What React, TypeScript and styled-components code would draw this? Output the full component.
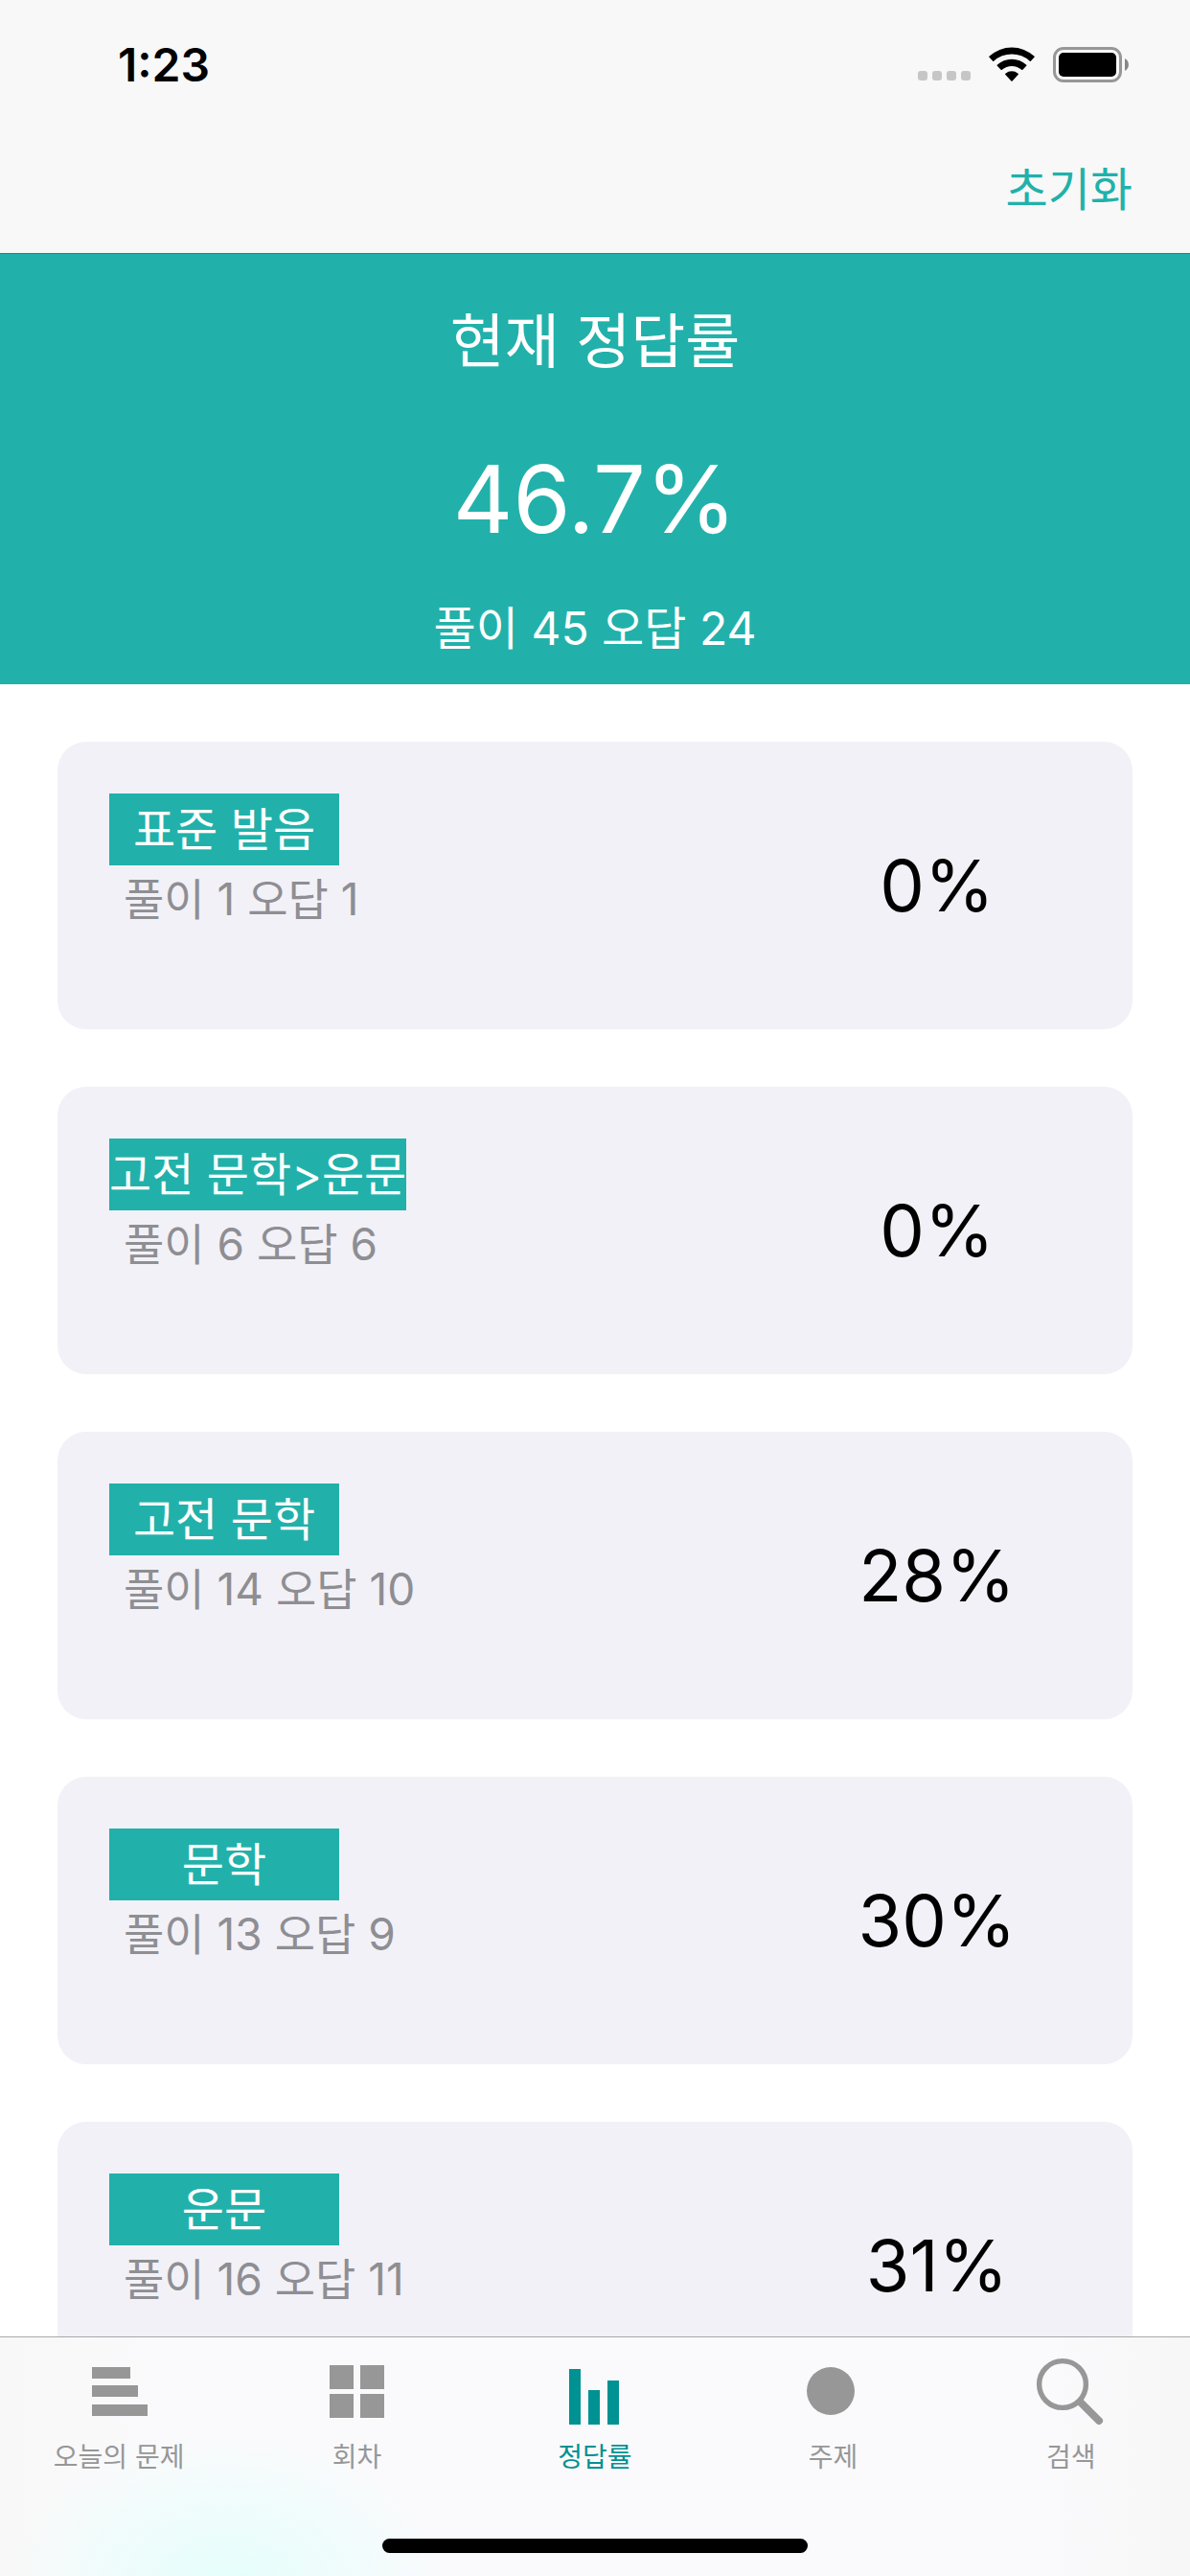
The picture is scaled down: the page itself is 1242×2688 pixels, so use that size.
import React from "react";
import styled, { createGlobalStyle } from "styled-components";

const TEAL = "#21b1aa";

const GlobalStyle = createGlobalStyle`
  *, *::before, *::after { box-sizing: border-box; }
  body {
    margin: 0;
    background: #ffffff;
    font-family: Inter, "Noto Sans CJK KR", sans-serif;
    color: #000000;
  }
  button { font: inherit; border: 0; padding: 0; background: none; cursor: pointer; }
  h1, p, ul { margin: 0; padding: 0; font-weight: 400; }
`;

const Screen = styled.div`
  display: flex;
  flex-direction: column;
  height: 100vh;
  overflow: hidden;
`;

const TopBar = styled.header`
  flex: none;
  background: #f8f8f8;
  border-bottom: 1px solid #1a8a84;
`;

const StatusBar = styled.div`
  display: flex;
  align-items: center;
  justify-content: space-between;
  height: 135px;
  padding: 0 63px 0 123px;
`;

const Clock = styled.time`
  font-size: 48px;
  line-height: 60px;
  font-weight: 600;
`;

const StatusIcons = styled.div`
  display: flex;
  align-items: center;
  gap: 19px;
`;

const SignalDots = styled.div`
  display: flex;
  align-self: flex-end;
  gap: 5px;
  padding-bottom: 2px;
`;

const SignalDot = styled.span`
  width: 10px;
  height: 10px;
  border-radius: 3px;
  background: #c6c6c6;
`;

const NavBar = styled.div`
  display: flex;
  align-items: center;
  justify-content: flex-end;
  height: 129px;
  padding: 0 60px 4px;
`;

const ResetButton = styled.button`
  color: ${TEAL};
  font-size: 48px;
  line-height: 72px;
`;

const Summary = styled.section`
  flex: none;
  display: flex;
  flex-direction: column;
  align-items: center;
  padding: 32px 60px 27px;
  background: ${TEAL};
  color: #ffffff;
`;

const SummaryTitle = styled.h1`
  font-size: 62px;
  line-height: 120px;
`;

const SummaryRate = styled.p`
  font-size: 97px;
  line-height: 208px;
`;

const SummaryCounts = styled.p`
  font-size: 48px;
  line-height: 62px;
`;

const TopicList = styled.ul`
  flex: 1;
  min-height: 0;
  display: flex;
  flex-direction: column;
  gap: 60px;
  padding: 60px;
  overflow-y: auto;
  scrollbar-width: none;
  list-style: none;
`;

const TopicCard = styled.li`
  flex: none;
  display: grid;
  grid-template-columns: minmax(0, 1fr) 408px;
  align-items: center;
  height: 300px;
  padding-left: 54px;
  border-radius: 30px;
  background: #f2f1f7;
`;

const TopicInfo = styled.div`
  display: flex;
  flex-direction: column;
  align-items: flex-start;
  align-self: start;
  padding-top: 54px;
`;

const TopicBadge = styled.span`
  min-width: 240px;
  background: ${TEAL};
  color: #ffffff;
  font-size: 48px;
  line-height: 75px;
  text-align: center;
  white-space: nowrap;
`;

const TopicCounts = styled.p`
  padding-left: 15px;
  color: #8e8e93;
  font-size: 46px;
  line-height: 70px;
`;

const TopicRate = styled.p`
  font-size: 74px;
  line-height: 96px;
  text-align: center;
`;

const BottomBar = styled.footer`
  flex: none;
  padding: 9px 0 24px;
  border-top: 1px solid #a9a9ac;
  background:
    radial-gradient(ellipse 230px 160px at 19% 105%, #e4fffb 0%, rgba(236, 253, 252, 0.8) 50%, rgba(250, 250, 252, 0) 100%),
    linear-gradient(90deg, #f8f8f8 0%, #fafafc 14%, #fafafc 88%, #f7f7f7 100%);
`;

const Tabs = styled.nav`
  display: grid;
  grid-template-columns: repeat(5, minmax(0, 1fr));
`;

const Tab = styled.button<{ $active?: boolean }>`
  display: flex;
  flex-direction: column;
  align-items: center;
  gap: 12px;
  color: ${(p) => (p.$active ? "#009193" : "#979797")};
  font-size: 28px;
  line-height: 40px;
`;

const HomeIndicator = styled.div`
  width: 444px;
  height: 15px;
  margin: 65px auto 0;
  border-radius: 8px;
  background: #000000;
`;

const Glyph = ({ children }: { children: React.ReactNode }) => (
  <svg width="100" height="84" viewBox="0 0 100 84" fill="currentColor" aria-hidden="true">
    {children}
  </svg>
);

const WifiIcon = () => (
  <svg width="48" height="37" viewBox="0 0 48 37" aria-hidden="true">
    <path d="M0.3 10.6 Q0 10.2 0.4 9.8 A34.5 34.5 0 0 1 47.6 9.8 Q48 10.2 47.7 10.6 L43.8 14.8 Q43.3 15.2 42.8 14.8 A27.6 27.6 0 0 0 5.2 14.8 Q4.7 15.2 4.2 14.8 Z" />
    <path d="M8.6 19.6 Q8.2 19.2 8.7 18.7 A22.4 22.4 0 0 1 39.3 18.7 Q39.8 19.2 39.4 19.6 L35.4 23.8 Q34.8 24.3 34.2 23.8 A15.4 15.4 0 0 0 13.8 23.8 Q13.2 24.3 12.6 23.8 Z" />
    <path d="M17.2 28.7 Q16.8 28.2 17.4 27.7 A10.4 10.4 0 0 1 30.6 27.7 Q31.2 28.2 30.8 28.7 L24.6 35.4 Q24 36 23.4 35.4 Z" />
  </svg>
);

const BatteryIcon = () => (
  <svg width="80" height="37" viewBox="0 0 80 37" aria-hidden="true">
    <rect x="1.5" y="1.5" width="69" height="34" rx="9.5" fill="none" stroke="#979797" strokeWidth="3" />
    <rect x="6" y="6" width="60" height="25" rx="5" />
    <path d="M75 12 A7.4 7.4 0 0 1 75 25 Z" fill="#868686" />
  </svg>
);

const topics = [
  { name: "표준 발음", solved: 1, wrong: 1, rate: 0 },
  { name: "고전 문학>운문", solved: 6, wrong: 6, rate: 0 },
  { name: "고전 문학", solved: 14, wrong: 10, rate: 28 },
  { name: "문학", solved: 13, wrong: 9, rate: 30 },
  { name: "운문", solved: 16, wrong: 11, rate: 31 },
];

const tabs = [
  {
    label: "오늘의 문제",
    icon: <path d="M22 22h40v12H22zM22 41h48v12H22zM22 61h58v12H22z" />,
  },
  {
    label: "회차",
    icon: <path d="M21 20h25v25H21zM53 20h25v25H53zM21 50h25v25H21zM53 50h25v25H53z" />,
  },
  {
    label: "정답률",
    active: true,
    icon: <path d="M23 24h12v58H23zM43 46h12v36H43zM63 36h12v46H63z" />,
  },
  { label: "주제", icon: <circle cx="48" cy="47" r="25" /> },
  {
    label: "검색",
    icon: (
      <g fill="none" stroke="currentColor">
        <circle cx="41" cy="40" r="24.4" strokeWidth="5.4" />
        <path d="M60 59 L79 78" strokeWidth="8" strokeLinecap="round" />
      </g>
    ),
  },
];

export default function App() {
  return (
    <Screen>
      <GlobalStyle />
      <TopBar>
        <StatusBar>
          <Clock>1:23</Clock>
          <StatusIcons>
            <SignalDots>
              {[0, 1, 2, 3].map((i) => (
                <SignalDot key={i} />
              ))}
            </SignalDots>
            <WifiIcon />
            <BatteryIcon />
          </StatusIcons>
        </StatusBar>
        <NavBar>
          <ResetButton type="button">초기화</ResetButton>
        </NavBar>
      </TopBar>
      <Summary>
        <SummaryTitle>현재 정답률</SummaryTitle>
        <SummaryRate>46.7%</SummaryRate>
        <SummaryCounts>풀이 45 오답 24</SummaryCounts>
      </Summary>
      <TopicList>
        {topics.map((t) => (
          <TopicCard key={t.name}>
            <TopicInfo>
              <TopicBadge>{t.name}</TopicBadge>
              <TopicCounts>{`풀이 ${t.solved} 오답 ${t.wrong}`}</TopicCounts>
            </TopicInfo>
            <TopicRate>{`${t.rate}%`}</TopicRate>
          </TopicCard>
        ))}
      </TopicList>
      <BottomBar>
        <Tabs>
          {tabs.map((t) => (
            <Tab key={t.label} type="button" $active={t.active} aria-current={t.active ? "page" : undefined}>
              <Glyph>{t.icon}</Glyph>
              <span>{t.label}</span>
            </Tab>
          ))}
        </Tabs>
        <HomeIndicator />
      </BottomBar>
    </Screen>
  );
}
